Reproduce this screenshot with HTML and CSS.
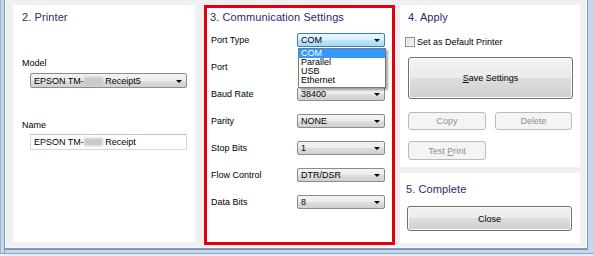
FILE: index.html
```html
<!DOCTYPE html>
<html lang="en">
<head>
	<meta charset="UTF-8">
	<title>Printer Settings</title>
	<link rel="stylesheet" href="styles.css">
</head>
<body>
	<div class="window">
		<div class="client">
			<section class="panel panel-printer">
				<h2>2. Printer</h2>
				<div class="field-label label-model">Model</div>
				<div class="combo combo-model">
					<span>EPSON TM-<i class="blur"></i> Receipt5</span>
					<b class="arrow"></b>
				</div>
				<div class="field-label label-name">Name</div>
				<div class="textbox">EPSON TM-<i class="blur"></i> Receipt</div>
			</section>

			<section class="panel panel-comm">
				<h2>3. Communication Settings</h2>
				<div class="comm-rows">
					<div class="comm-row">
						<span class="comm-label">Port Type</span>
						<div class="combo combo-active">
							<span>COM</span>
							<b class="arrow"></b>
							<ul class="dropdown">
								<li class="selected">COM</li>
								<li>Parallel</li>
								<li>USB</li>
								<li>Ethernet</li>
							</ul>
						</div>
					</div>
					<div class="comm-row">
						<span class="comm-label">Port</span>
					</div>
					<div class="comm-row">
						<span class="comm-label">Baud Rate</span>
						<div class="combo"><span>38400</span><b class="arrow"></b></div>
					</div>
					<div class="comm-row">
						<span class="comm-label">Parity</span>
						<div class="combo"><span>NONE</span><b class="arrow"></b></div>
					</div>
					<div class="comm-row">
						<span class="comm-label">Stop Bits</span>
						<div class="combo"><span>1</span><b class="arrow"></b></div>
					</div>
					<div class="comm-row">
						<span class="comm-label">Flow Control</span>
						<div class="combo"><span>DTR/DSR</span><b class="arrow"></b></div>
					</div>
					<div class="comm-row">
						<span class="comm-label">Data Bits</span>
						<div class="combo"><span>8</span><b class="arrow"></b></div>
					</div>
				</div>
			</section>

			<div class="column">
				<section class="panel panel-apply">
					<h2>4. Apply</h2>
					<label class="check">
						<span class="check-box"></span>
						Set as Default Printer
					</label>
					<button class="btn btn-save"><u>S</u>ave Settings</button>
					<div class="btn-row">
						<button class="btn btn-small" disabled>Copy</button>
						<button class="btn btn-small btn-delete" disabled>Delete</button>
					</div>
					<button class="btn btn-small btn-test" disabled>Test <u>P</u>rint</button>
				</section>
				<section class="panel panel-complete">
					<h2>5. Complete</h2>
					<button class="btn btn-close">Close</button>
				</section>
			</div>
		</div>
	</div>
</body>
</html>
```

FILE: styles.css
```css
* {
	box-sizing: border-box;
}

body {
	margin: 0;
	padding: 0;
	font-family: "Liberation Sans", Arial, sans-serif;
	font-size: 9px;
	color: #000;
	background-color: #f0f0f0;
}

/* Window frame */
.window {
	width: 593px;
	height: 256px;
	padding: 0 7px 9px 6px;
	background-color: #c5d7ec;
	background-image: linear-gradient(to right, #9fb5cf 0, #9fb5cf 1px, transparent 1px, transparent 4px, #8aa2c0 4px, #8aa2c0 5px, transparent 5px);
	box-shadow: inset 0 -2px 0 #e7eef7, inset 0 -3px 0 #8ea6c3;
}

.client {
	display: flex;
	width: 580px;
	height: 247px;
	padding: 5px 6px 4px 7px;
	background-color: #f0f0f0;
	box-shadow: 0 0 0 1px #f8fbfe, 0 1px 0 2px #7f98b7;
}

/* Panels */
.panel {
	background-color: #fff;
}

.panel h2 {
	margin: 5px 0 0;
	font-size: 11px;
	font-weight: normal;
	line-height: 14px;
	color: #2a2b70;
	letter-spacing: .1px;
}

.panel-printer {
	width: 182px;
	margin-bottom: 1px;
	margin-right: 9px;
}

.panel-printer h2 {
	padding-left: 9px;
}

.field-label {
	padding-left: 9px;
	line-height: 12px;
}

.label-model {
	margin-top: 33px;
}

.label-name {
	margin-top: 31px;
}

.textbox {
	width: 157px;
	height: 16px;
	margin: 3px 0 0 17px;
	padding-left: 3px;
	line-height: 14px;
	border: 1px solid #d6d6d6;
	border-top-color: #c2c2c2;
	background-color: #fff;
}

.blur {
	display: inline-block;
	width: 19px;
	height: 8px;
	vertical-align: -1px;
	background-color: #c9c9c9;
	filter: blur(1px);
}

/* Combo boxes */
.combo {
	position: relative;
	display: flex;
	align-items: center;
	width: 88px;
	height: 14px;
	padding-left: 3px;
	border: 1px solid #8c8c8c;
	border-radius: 2px;
	background: linear-gradient(#f3f3f3 0%, #ebebeb 50%, #dedede 50%, #d0d0d0 100%);
	white-space: nowrap;
}

.combo.combo-model {
	width: 157px;
	height: 15px;
	margin: 4px 0 0 17px;
}

.combo-active {
	border-color: #3c7fb1;
	background: linear-gradient(#eaf6fd 0%, #d9f0fc 50%, #bee6fd 50%, #a7d9f5 100%);
}

.combo .arrow {
	position: absolute;
	right: 4px;
	top: 50%;
	margin-top: -1px;
	border-top: 3px solid #000;
	border-left: 3px solid transparent;
	border-right: 3px solid transparent;
}

.dropdown {
	position: absolute;
	top: 14px;
	left: 0;
	width: 88px;
	margin: 0;
	padding: 0 0 2px;
	list-style: none;
	background-color: #fff;
	border: 1px solid #7a7a7a;
	box-shadow: 2px 2px 2px rgba(0, 0, 0, .35);
	z-index: 5;
}

.dropdown li {
	height: 9px;
	padding-left: 2px;
	line-height: 9px;
	font-size: 9px;
}

.dropdown li.selected {
	background-color: #3399ff;
	color: #fff;
}

/* Communication settings */
.panel-comm {
	width: 191px;
	margin-bottom: -2px;
	margin-right: 5px;
	border: 3px solid #e3000e;
}

.panel-comm h2 {
	margin-top: 2px;
	padding-left: 3px;
}

.comm-rows {
	margin-top: 2px;
}

.comm-row {
	display: flex;
	align-items: center;
	height: 27px;
	padding-left: 4px;
}

.comm-label {
	width: 86px;
}

/* Right column */
.column {
	display: flex;
	flex-direction: column;
	width: 180px;
}

.panel-apply {
	height: 162px;
	margin-bottom: 6px;
}

.panel-apply h2 {
	padding-left: 8px;
}

.check {
	display: flex;
	align-items: center;
	height: 12px;
	margin-top: 12px;
	padding-left: 5px;
}

.check-box {
	width: 10px;
	height: 10px;
	margin-right: 2px;
	border: 1px solid #8e8f8f;
	background: linear-gradient(135deg, #dcdcdc, #f6f6f6);
	box-shadow: inset 0 0 0 1px #f4f4f4;
}

.btn {
	display: block;
	padding: 0;
	font-family: inherit;
	font-size: 9px;
	color: #000;
	border: 1px solid #707070;
	border-radius: 3px;
	background: linear-gradient(#f2f2f2 0%, #ebebeb 50%, #dddddd 50%, #cfcfcf 100%);
	box-shadow: inset 0 0 0 1px #fbfbfb;
}

.btn:disabled {
	color: #8d8d8d;
	border-color: #b8bcbe;
	background: #f4f4f4;
	box-shadow: none;
}

.btn-save {
	width: 165px;
	height: 42px;
	margin: 9px 0 0 8px;
}

.btn-row {
	display: flex;
	margin: 13px 0 0 8px;
}

.btn-small {
	width: 78px;
	height: 18px;
}

.btn-delete {
	width: 77px;
	margin-left: 9px;
}

.btn-test {
	height: 19px;
	margin: 11px 0 0 8px;
}

.panel-complete {
	flex: 1;
}

.panel-complete h2 {
	margin-top: 9px;
	padding-left: 6px;
}

.btn-close {
	width: 165px;
	height: 25px;
	margin: 10px 0 0 7px;
}
```
